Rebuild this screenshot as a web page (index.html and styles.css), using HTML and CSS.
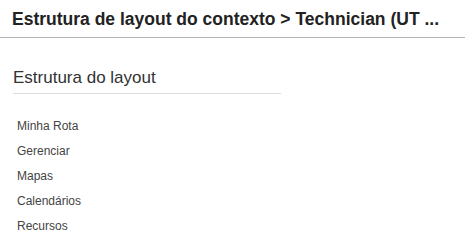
FILE: index.html
```html
<!DOCTYPE html>
<html lang="pt">
<head>
<meta charset="utf-8">
<link rel="stylesheet" href="styles.css">
</head>
<body>
<div class="header"><h1 class="title">Estrutura de layout do contexto &gt; Technician (UT ...</h1></div>
<div class="panel">
  <h2 class="subtitle">Estrutura do layout</h2>
  <ul class="list">
    <li>Minha Rota</li>
    <li>Gerenciar</li>
    <li>Mapas</li>
    <li>Calendários</li>
    <li>Recursos</li>
  </ul>
</div>
</body>
</html>
```
FILE: styles.css
```css
html, body { margin: 0; padding: 0; background: #fff; }
body { font-family: "Liberation Sans", Arial, sans-serif; color: #333; width: 465px; height: 240px; overflow: hidden; }
.header { height: 37px; border-bottom: 1px solid #b4b4b4; padding: 0 12px; display: flex; align-items: center; box-sizing: content-box; }
.title { margin: 0; font-size: 17.5px; font-weight: bold; color: #222; white-space: nowrap; line-height: 20px; }
.panel { padding: 0 12px; }
.subtitle { margin: 27px 0 0 1px; width: 268px; font-size: 17px; font-weight: normal; color: #333; line-height: 26px; padding-bottom: 2px; border-bottom: 1px solid #ddd; }
.list { list-style: none; margin: 0; padding: 20px 0 0 5px; }
.list li { font-size: 12px; line-height: 25px; color: #444; }
```
